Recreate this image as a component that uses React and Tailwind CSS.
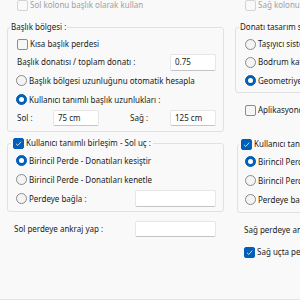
import React from "react";

const Check = ({ checked, disabled, children }) => (
  <div className="flex items-center gap-[2px] whitespace-nowrap">
    <span
      className={
        "flex items-center justify-center w-[11px] h-[11px] rounded-[2px] border shrink-0 " +
        (checked
          ? "bg-[#005fb8] border-[#005fb8]"
          : disabled
          ? "bg-[#f9f9f9] border-[#d4d4d4]"
          : "bg-[#f6f6f6] border-[#8c8c8c]")
      }
    >
      {checked && (
        <svg width="9" height="9" viewBox="0 0 9 9">
          <path d="M2 4.8 L3.8 6.5 L7.2 2.6" fill="none" stroke="#dfe9f5" strokeWidth="0.9" />
        </svg>
      )}
    </span>
    <span className={disabled ? "text-[#a0a0a0]" : ""}>{children}</span>
  </div>
);

const Radio = ({ checked, children }) => (
  <div className="flex items-center gap-[2px] whitespace-nowrap">
    <span
      className={
        "flex items-center justify-center w-[11px] h-[11px] rounded-full border shrink-0 " +
        (checked ? "bg-[#005fb8] border-[#005fb8]" : "bg-[#f4f4f4] border-[#8a8a8a]")
      }
    >
      {checked && <span className="w-[5px] h-[5px] rounded-full bg-white" />}
    </span>
    <span>{children}</span>
  </div>
);

const TextBox = ({ value, className }) => (
  <div
    className={
      "flex items-center bg-white border border-[#e6e6e6] border-b-[#c4c4c4] rounded-[2px] pl-[4px] " +
      className
    }
  >
    {value}
  </div>
);

const LeftColumn = () => (
  <div className="flex flex-col w-[217px] shrink-0">
    <div className="flex items-center h-[16px] pl-[10px]">
      <Check disabled>Sol kolonu başlık olarak kullan</Check>
    </div>

    <fieldset className="mt-[6px] border border-[#e1e1e1] rounded-[3px] pl-[2px] pr-[7px] pb-[5px]">
      <legend className="px-[1px] h-[16px] leading-[16px]">Başlık bölgesi :</legend>
      <div className="flex flex-col pl-[7px]">
        <div className="flex items-center h-[18px]">
          <Check>Kısa başlık perdesi</Check>
        </div>
        <div className="flex items-center justify-between h-[18px]">
          <span>Başlık donatısı / toplam donatı :</span>
          <TextBox value="0.75" className="w-[46px] h-[17px]" />
        </div>
        <div className="flex items-center h-[19px] -ml-[1px]">
          <Radio>Başlık bölgesi uzunluğunu otomatik hesapla</Radio>
        </div>
        <div className="flex items-center h-[19px] -ml-[1px]">
          <Radio checked>Kullanıcı tanımlı başlık uzunlukları :</Radio>
        </div>
        <div className="flex items-center h-[17px]">
          <span className="w-[36px]">Sol :</span>
          <TextBox value="75 cm" className="w-[46px] h-[16px]" />
          <span className="ml-[31px]">Sağ :</span>
          <TextBox value="125 cm" className="ml-auto w-[46px] h-[16px]" />
        </div>
      </div>
    </fieldset>

    <fieldset className="mt-[3px] border border-[#e1e1e1] rounded-[3px] pl-[3px] pr-[7px] pb-[3px]">
      <legend className="px-[2px] h-[16px] flex items-center">
        <Check checked>Kullanıcı tanımlı birleşim - Sol uç :</Check>
      </legend>
      <div className="flex flex-col pl-[5px]">
        <div className="flex items-center h-[19px]">
          <Radio checked>Birincil Perde - Donatıları kesiştir</Radio>
        </div>
        <div className="flex items-center h-[19px]">
          <Radio>Birincil Perde - Donatıları kenetle</Radio>
        </div>
        <div className="flex items-center h-[19px]">
          <Radio>Perdeye bağla :</Radio>
          <TextBox value="" className="ml-auto w-[81px] h-[17px]" />
        </div>
      </div>
    </fieldset>

    <div className="flex items-center mt-[9px] h-[16px] pl-[7px] pr-[8px]">
      <span>Sol perdeye ankraj yap :</span>
      <TextBox value="" className="ml-auto w-[81px] h-[16px]" />
    </div>
  </div>
);

const RightColumn = () => (
  <div className="flex flex-col w-[240px] shrink-0">
    <div className="flex items-center h-[16px] pl-[10px]">
      <Check disabled>Sağ kolonu başlık olarak kullan</Check>
    </div>

    <fieldset className="mt-[6px] border border-[#e1e1e1] rounded-[3px] pl-[3px] pb-[2px]">
      <legend className="px-[1px] h-[16px] leading-[16px]">Donatı tasarım standardı :</legend>
      <div className="flex flex-col pl-[6px]">
        <div className="flex items-center h-[18px]">
          <Radio>Taşıyıcı sistem perdesi</Radio>
        </div>
        <div className="flex items-center h-[18px]">
          <Radio>Bodrum katı perdesi</Radio>
        </div>
        <div className="flex items-center h-[19px]">
          <Radio checked>Geometriye göre belirle</Radio>
        </div>
      </div>
    </fieldset>

    <div className="flex items-center mt-[8px] h-[18px] pl-[10px]">
      <Check>Aplikasyonda göster</Check>
    </div>

    <fieldset className="ml-[2px] mt-[17px] border border-[#e1e1e1] rounded-[3px] pl-[1px] pb-[3px]">
      <legend className="px-[2px] h-[16px] flex items-center">
        <Check checked>Kullanıcı tanımlı birleşim - Sağ uç :</Check>
      </legend>
      <div className="flex flex-col pl-[6px]">
        <div className="flex items-center h-[19px]">
          <Radio checked>Birincil Perde - Donatıları kesiştir</Radio>
        </div>
        <div className="flex items-center h-[19px]">
          <Radio>Birincil Perde - Donatıları kenetle</Radio>
        </div>
        <div className="flex items-center h-[19px]">
          <Radio>Perdeye bağla :</Radio>
        </div>
      </div>
    </fieldset>

    <div className="flex items-center mt-[9px] h-[16px] pl-[9px]">
      <span>Sağ perdeye ankraj yap :</span>
    </div>
    <div className="flex items-center mt-[6px] h-[16px] pl-[9px]">
      <Check checked>Sağ uçta perdeye ankraj yap</Check>
    </div>
  </div>
);

const App = () => {
  return (
    <div className="w-[300px] h-[300px] overflow-hidden bg-[#f9f9f9] text-[#1b1b1b] text-[8px] leading-none font-['Noto_Sans',sans-serif] border-b border-[#e3e3e3]">
      <div className="flex gap-[11px] w-[560px] pl-[7px] -mt-[3px]">
        <LeftColumn />
        <RightColumn />
      </div>
    </div>
  );
};

export default App;
